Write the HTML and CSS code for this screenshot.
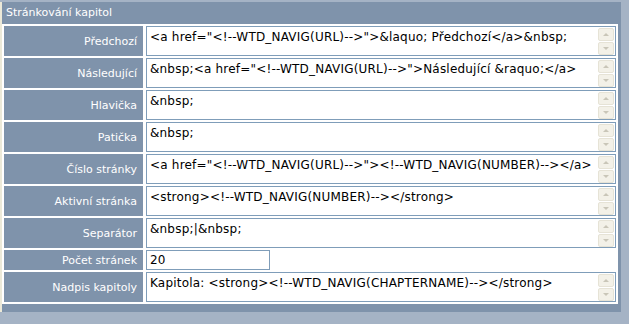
FILE: index.html
```html
<!DOCTYPE html>
<html lang="cs">
<head>
  <meta charset="UTF-8" />
  <title>Stránkování kapitol</title>
  <link rel="stylesheet" href="styles.css">
</head>
<body>
  <div class="page">
    <div class="panel">
      <div class="title">Stránkování kapitol</div>
      <table class="form">
        <tr>
          <td class="label">Předchozí</td>
          <td class="value"><div class="field"><div class="text">&lt;a href="&lt;!--WTD_NAVIG(URL)--&gt;"&gt;&amp;laquo; Předchozí&lt;/a&gt;&amp;nbsp;</div><div class="scroll"><span class="btn up"></span><span class="btn down"></span></div></div></td>
        </tr>
        <tr>
          <td class="label">Následující</td>
          <td class="value"><div class="field"><div class="text">&amp;nbsp;&lt;a href="&lt;!--WTD_NAVIG(URL)--&gt;"&gt;Následující &amp;raquo;&lt;/a&gt;</div><div class="scroll"><span class="btn up"></span><span class="btn down"></span></div></div></td>
        </tr>
        <tr>
          <td class="label">Hlavička</td>
          <td class="value"><div class="field"><div class="text">&amp;nbsp;</div><div class="scroll"><span class="btn up"></span><span class="btn down"></span></div></div></td>
        </tr>
        <tr>
          <td class="label">Patička</td>
          <td class="value"><div class="field"><div class="text">&amp;nbsp;</div><div class="scroll"><span class="btn up"></span><span class="btn down"></span></div></div></td>
        </tr>
        <tr>
          <td class="label">Číslo stránky</td>
          <td class="value"><div class="field"><div class="text">&lt;a href="&lt;!--WTD_NAVIG(URL)--&gt;"&gt;&lt;!--WTD_NAVIG(NUMBER)--&gt;&lt;/a&gt;</div><div class="scroll"><span class="btn up"></span><span class="btn down"></span></div></div></td>
        </tr>
        <tr>
          <td class="label">Aktivní stránka</td>
          <td class="value"><div class="field"><div class="text">&lt;strong&gt;&lt;!--WTD_NAVIG(NUMBER)--&gt;&lt;/strong&gt;</div><div class="scroll"><span class="btn up"></span><span class="btn down"></span></div></div></td>
        </tr>
        <tr>
          <td class="label">Separátor</td>
          <td class="value"><div class="field"><div class="text">&amp;nbsp;|&amp;nbsp;</div><div class="scroll"><span class="btn up"></span><span class="btn down"></span></div></div></td>
        </tr>
        <tr>
          <td class="label">Počet stránek</td>
          <td class="value"><div class="input">20</div></td>
        </tr>
        <tr>
          <td class="label">Nadpis kapitoly</td>
          <td class="value"><div class="field"><div class="text">Kapitola: &lt;strong&gt;&lt;!--WTD_NAVIG(CHAPTERNAME)--&gt;&lt;/strong&gt;</div><div class="scroll"><span class="btn up"></span><span class="btn down"></span></div></div></td>
        </tr>
      </table>
    </div>
  </div>
</body>
</html>
```

FILE: styles.css
```css
body {
  margin: 0;
  background: #a5b3c5;
  font-family: "DejaVu Sans", Verdana, sans-serif;
  font-size: 11px;
}
.page {
  margin-top: 2px;
  border-left: 2px solid #ece9d8;
  width: 619px;
}
.panel {
  background: #7f93ab;
  padding-bottom: 8px;
}
.title {
  height: 22px;
  line-height: 21px;
  padding-left: 4px;
  color: #fff;
}
.form {
  width: 616px;
  background: #fff;
  border-spacing: 2px;
}
.form td {
  padding: 0;
}
.label {
  width: 133px;
  background: #7f93ab;
  color: #fff;
  text-align: right;
  padding: 1px 6px 0 0 !important;
}
.value {
  background: #fff;
  padding-left: 1px !important;
}
.field {
  display: flex;
  height: 28px;
  border: 1px solid #7f9db9;
  background: #fff;
}
.text {
  flex: 1;
  padding: 3px 3px 0;
  font-size: 12px;
  letter-spacing: 0.2px;
  color: #000;
  white-space: nowrap;
}
.scroll {
  width: 16px;
  display: flex;
  flex-direction: column;
  gap: 1px;
  padding: 1px 1px 0 0;
}
.btn {
  flex: 1;
  background: #f3f1e8;
  border: 1px solid #e6e3d6;
  border-radius: 2px;
  position: relative;
}
.btn::after {
  content: "";
  position: absolute;
  left: 4px;
  top: 4px;
  border-left: 3px solid transparent;
  border-right: 3px solid transparent;
}
.btn.up::after {
  border-bottom: 3px solid #c9c6b8;
}
.btn.down::after {
  border-top: 3px solid #c9c6b8;
}
.input {
  width: 119px;
  height: 18px;
  line-height: 18px;
  border: 1px solid #7f9db9;
  padding-left: 3px;
  font-size: 12px;
}
```
